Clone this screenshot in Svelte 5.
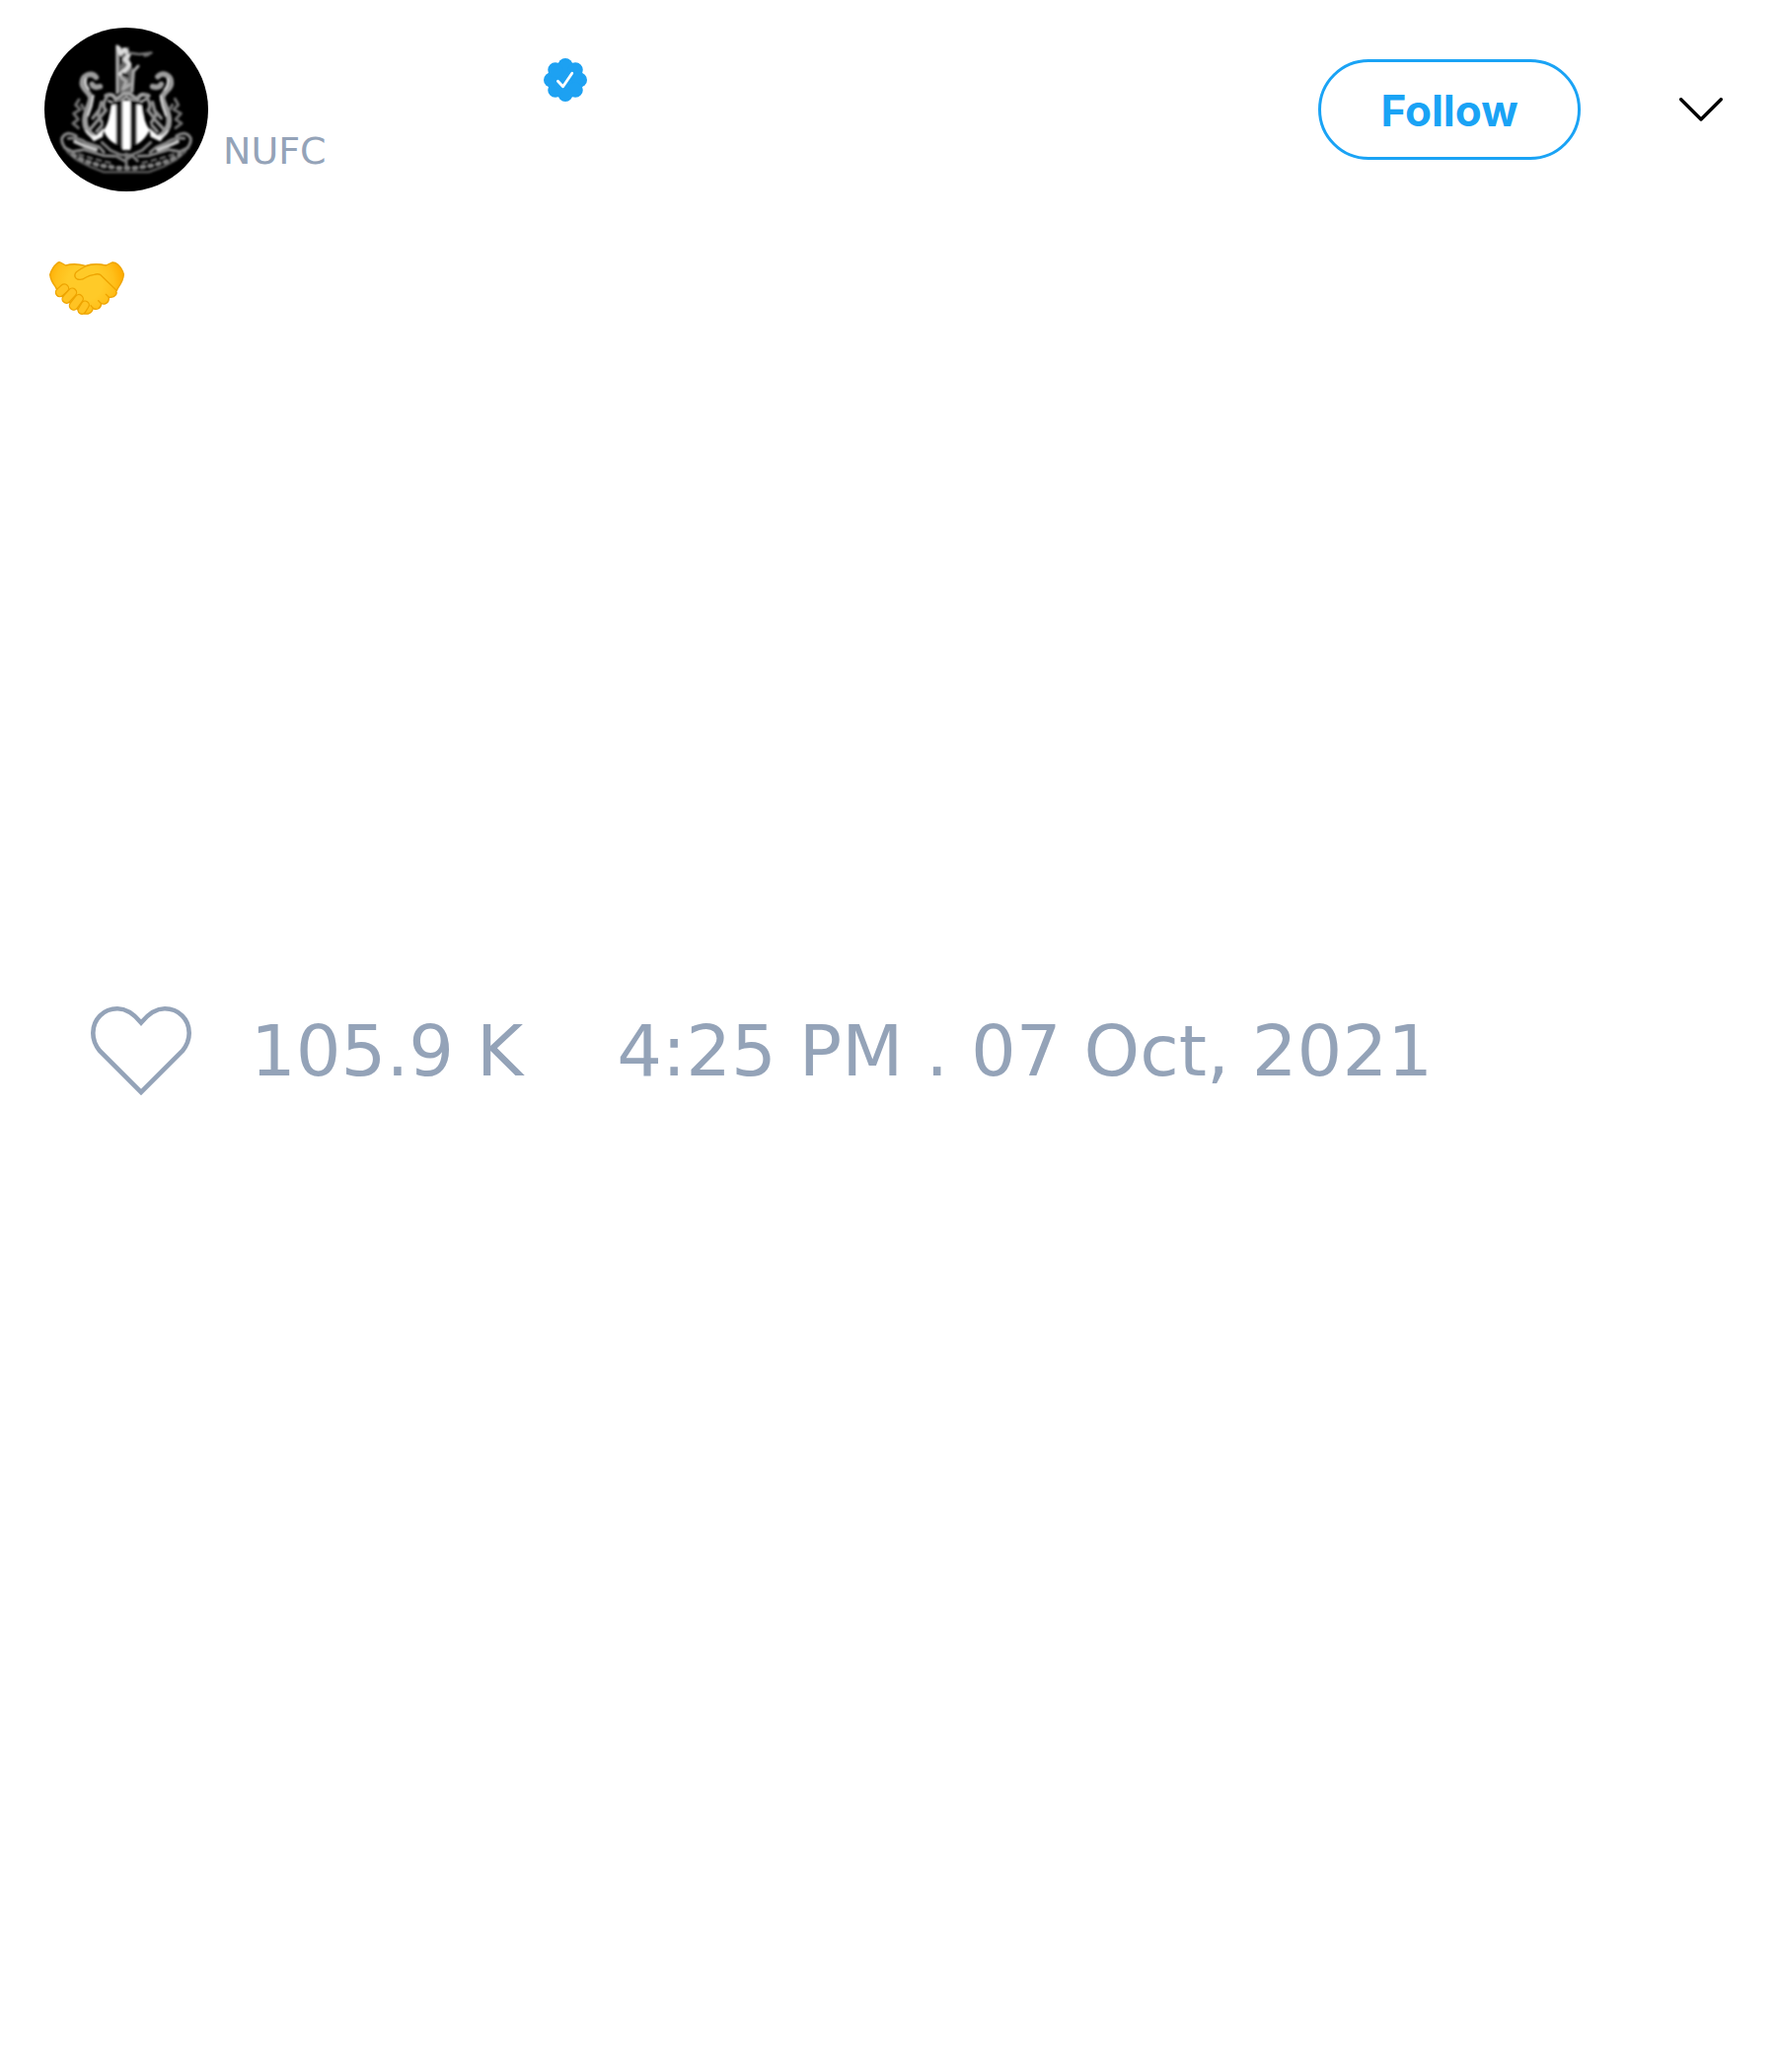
<script>
  const tweet = {
    handle: 'NUFC',
    likes: '105.9 K',
    time: '4:25 PM . 07 Oct, 2021',
  };
  const lobes = [0, 45, 90, 135, 180, 225, 270, 315];
</script>

<article class="tweet">
  <header>
    <svg class="avatar" viewBox="45 39 498 498" role="img" aria-label="Club crest">
      <defs>
        <filter id="soft" x="-5%" y="-5%" width="110%" height="110%">
          <feGaussianBlur stdDeviation="3" />
        </filter>
      </defs>
      <circle cx="294" cy="288" r="249" fill="#000" />
      <g filter="url(#soft)" fill="none" stroke-linecap="round" stroke-linejoin="round">
        <!-- castle and flag -->
        <path d="M262 92L278 100L302 98L306 145L316 170L314 238L264 238Z" fill="#6a6a6a" />
        <path d="M266 94V238" stroke="#b4b4b4" stroke-width="7" />
        <path d="M270 100L276 118L290 106L302 122L290 136L304 150L296 164L276 180" stroke="#ddd" stroke-width="12" />
        <path d="M302 116L334 120L370 116M350 124L362 121" stroke="#757575" stroke-width="8" />
        <path d="M330 156L316 172L312 232M278 190L294 202L284 226L304 212" stroke="#aaa" stroke-width="9" />
        <path d="M277 130V148M284 180L298 186" stroke="#0a0a0a" stroke-width="8" />
        <!-- helmet ridge -->
        <path d="M232 246Q254 236 262 258L286 240L304 240L328 258Q336 234 362 246" stroke="#a0a0a0" stroke-width="12" />
        <path d="M240 262L262 270L294 250L330 268L352 258" stroke="#b4b4b4" stroke-width="7" />
        <!-- shield -->
        <path d="M248 268Q294 250 344 268C356 310 352 350 340 384Q320 404 294 408Q268 404 246 380C234 344 236 306 248 268Z" fill="#080808" />
        <path d="M250 276L262 274V392Q238 382 226 352Q246 322 250 276ZM283 262H306V410H283ZM327 274L340 276Q344 322 364 350Q350 380 327 392Z" fill="#fff" stroke="#fff" stroke-width="2" />
        <path d="M273 276V394M317 276V394" stroke="#3c3c3c" stroke-width="3" />
        <!-- left seahorse -->
        <path d="M214 218Q196 224 190 211M202 190C190 174 160 180 160 208C160 228 188 238 186 256C182 280 168 296 168 322C168 344 176 358 194 368" stroke="#9c9c9c" stroke-width="17" />
        <path d="M172 194Q166 210 180 226M194 246L188 278L178 306" stroke="#ddd" stroke-width="6" />
        <path d="M238 244Q216 276 232 290L206 322L184 348M212 288L192 314M220 336L204 354M218 266L208 304L220 328" stroke="#8f8f8f" stroke-width="10" />
        <path d="M150 258L140 274L154 288L134 300L148 318L132 330L148 344M158 274L166 288" stroke="#6e6e6e" stroke-width="9" />
        <path d="M172 354Q184 374 204 368L224 348L220 370L196 382Z" fill="#fff" stroke="#e4e4e4" stroke-width="5" />
        <!-- right seahorse -->
        <path d="M374 218Q394 224 400 211M390 188C402 172 432 182 430 210C428 230 400 236 404 256C410 280 424 296 424 322C424 344 414 358 398 368" stroke="#9c9c9c" stroke-width="17" />
        <path d="M420 194Q424 210 410 228M398 246L404 278L414 306" stroke="#ddd" stroke-width="6" />
        <path d="M352 244Q374 276 360 290L384 322L408 348M378 288L400 314M372 336L388 354M374 266L384 304L370 328" stroke="#8f8f8f" stroke-width="10" />
        <path d="M442 256L452 274L438 288L460 300L444 318L462 330L444 344M434 274L426 288" stroke="#6e6e6e" stroke-width="9" />
        <path d="M420 354Q408 374 388 368L366 348L370 370L396 382Z" fill="#fff" stroke="#e4e4e4" stroke-width="5" />
        <!-- motto ribbon -->
        <path d="M142 368Q112 350 98 376Q96 396 118 414M118 376Q148 372 170 388L212 402L226 418M106 404L130 416L164 410L224 428L258 430" stroke="#868686" stroke-width="9" />
        <path d="M138 386L166 398L202 410" stroke="#c8c8c8" stroke-width="11" />
        <path d="M446 368Q476 350 490 376Q492 396 470 414M470 376Q440 372 418 388L386 402L366 418M482 404L458 416L424 410L364 428L330 430" stroke="#868686" stroke-width="9" />
        <path d="M450 386L422 398L390 410" stroke="#c8c8c8" stroke-width="11" />
        <path d="M220 388L246 412L278 426H310L342 412L368 388M264 430L288 444L312 428L328 444M294 422V462" stroke="#7c7c7c" stroke-width="9" />
        <path d="M114 416L142 440L184 462L226 478H362L406 462L446 440L474 416" stroke="#5f5f5f" stroke-width="7" />
        <path d="M132 426L166 444L214 458L270 466H320L374 458L424 444L456 426" stroke="#828282" stroke-width="14" stroke-dasharray="7 17" />
        <path d="M150 424L194 438L246 450M438 424L394 438L342 450" stroke="#6c6c6c" stroke-width="7" stroke-dasharray="14 14" />
      </g>
    </svg>

    <div class="author">
      <div class="name">
        <svg class="badge" viewBox="0 0 44 44" role="img" aria-label="Verified account">
          <g fill="#1da1f2">
            <circle cx="22" cy="22" r="17" />
            {#each lobes as angle}
              <circle cx="22" cy="7.6" r="7.6" transform="rotate({angle} 22 22)" />
            {/each}
          </g>
          <path d="M14.4 23.2L19.6 28.8L28.8 15.2" fill="none" stroke="#fff" stroke-width="2.8" stroke-linecap="round" stroke-linejoin="round" />
        </svg>
      </div>
      <span class="handle">{tweet.handle}</span>
    </div>

    <button class="follow" type="button">Follow</button>
    <button class="more" type="button" aria-label="More options">
      <svg viewBox="0 0 44 24"><path d="M1.7 1.7L22 22L42.3 1.7" /></svg>
    </button>
  </header>

  <div class="text">
    <svg class="emoji" viewBox="30 46 228 162" role="img" aria-label="Handshake">
      <defs>
        <radialGradient id="skin" gradientUnits="userSpaceOnUse" cx="138" cy="112" r="118">
          <stop offset="0.45" stop-color="#ffca28" />
          <stop offset="0.75" stop-color="#ffbf1a" />
          <stop offset="1" stop-color="#ffab00" />
        </radialGradient>
      </defs>
      <g fill="url(#skin)" stroke="#eea400" stroke-width="4" stroke-linecap="round" stroke-linejoin="round">
        <path d="M64 49L80 58Q106 50 140 59Q166 51 202 58L221 49Q230 48 238 55Q252 68 256 85Q256 102 238 128Q236 134 233 137Q238 146 226 153Q218 156 211 155Q212 168 203 173Q195 177 188 174Q187 186 178 190Q170 193 163 188Q160 202 148 205Q132 208 122 196L58 142L48 122Q34 104 32 86Q38 64 54 51Q59 47 64 49Z" />
        <path d="M234 134L186 87Q178 82 166 86Q152 88 142 94Q128 104 115 100Q104 94 109 82Q113 75 140 61Q166 50 202 58" />
      </g>
      <g fill="#ffc323" stroke="#eea400" stroke-width="4">
        <rect x="-13" y="-22" width="26" height="44" rx="13" transform="translate(69 134) rotate(48)" />
        <rect x="-13" y="-26" width="26" height="52" rx="13" transform="translate(91 150) rotate(42)" />
        <rect x="-13" y="-26" width="26" height="52" rx="13" transform="translate(112 170) rotate(37)" />
        <rect x="-12" y="-21" width="24" height="42" rx="12" transform="translate(134 186) rotate(32)" />
      </g>
      <path d="M163 188L156 180M188 174L179 165M211 155L202 146" fill="none" stroke="#eea400" stroke-width="4" stroke-linecap="round" />
    </svg>
  </div>

  <footer>
    <button class="like" type="button">
      <svg viewBox="0 0 102 90" aria-hidden="true">
        <path d="M51 16.5C44 8 37 2.3 27 2.3C13 2.3 2.3 13 2.3 27C2.3 34 5 40 9 45L51 87L93 45C97 40 99.7 34 99.7 27C99.7 13 89 2.3 75 2.3C65 2.3 58 8 51 16.5Z" />
      </svg>
      <span>{tweet.likes}</span>
    </button>
    <time datetime="2021-10-07T16:25">{tweet.time}</time>
  </footer>
</article>

<style>
  :global(body) {
    margin: 0;
    background: #fff;
  }

  .tweet {
    padding: 28px 54px 28px 45px;
    font-family: 'DejaVu Sans', sans-serif;
    color: #94a3b8;
  }

  header {
    display: flex;
    align-items: center;
  }

  button {
    padding: 0;
    border: 0;
    background: none;
    font: inherit;
    color: inherit;
    cursor: pointer;
  }

  svg {
    display: block;
  }

  .avatar {
    flex: none;
    width: 166px;
    height: 166px;
  }

  .author {
    flex: 1;
    display: flex;
    flex-direction: column;
    gap: 26px;
    padding: 14px 0 0 15px;
  }

  .name {
    padding-left: 325px;
  }

  .badge {
    width: 44px;
    height: 44px;
  }

  .handle {
    font-size: 38px;
    line-height: 48px;
  }

  .follow {
    box-sizing: border-box;
    width: 266px;
    height: 102px;
    padding-top: 2px;
    border: 3px solid #1aa3f5;
    border-radius: 51px;
    font: 700 44px/60px Inter, sans-serif;
    color: #1aa3f5;
  }

  .more {
    margin-left: 100px;
  }

  .more svg {
    width: 44px;
    height: 24px;
    fill: none;
    stroke: #000;
    stroke-width: 3.4;
    stroke-linecap: round;
    stroke-linejoin: round;
  }

  .text {
    min-height: 755px;
    padding: 71px 5px 0;
  }

  .emoji {
    width: 76px;
    height: 54px;
  }

  footer {
    display: flex;
    align-items: center;
    flex-wrap: wrap;
    gap: 95px;
    padding-left: 47px;
    font-size: 72px;
    line-height: 90px;
  }

  .like {
    display: flex;
    align-items: center;
    gap: 60px;
  }

  .like svg {
    width: 102px;
    height: 90px;
    fill: none;
    stroke: #94a3b8;
    stroke-width: 4.6;
  }
</style>
